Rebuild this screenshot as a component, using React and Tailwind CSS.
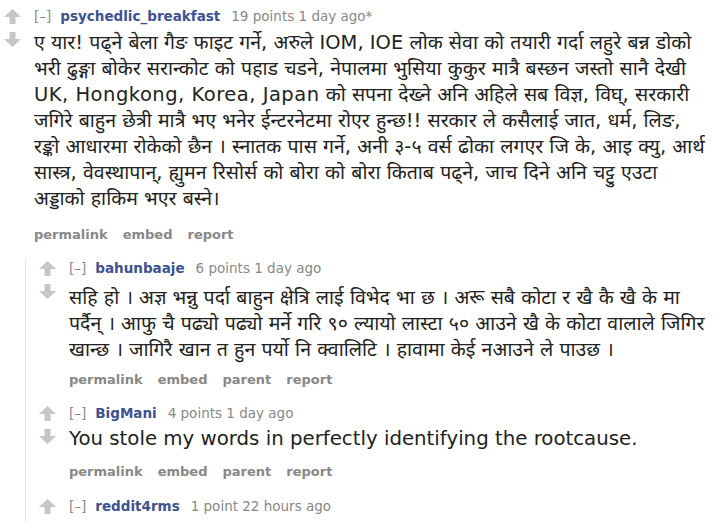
import React from "react";

const Up = () => (
  <svg width="17" height="15" viewBox="0 0 17 15" className="block">
    <polygon points="8.5,0 17,8 11.5,8 11.5,15 5.5,15 5.5,8 0,8" fill="#c6c6c6" />
  </svg>
);
const Down = () => (
  <svg width="17" height="15" viewBox="0 0 17 15" className="block">
    <polygon points="8.5,15 17,7 11.5,7 11.5,0 5.5,0 5.5,7 0,7" fill="#c6c6c6" />
  </svg>
);

function Header({ user, meta }) {
  return (
    <div className="h-[20px] flex items-center whitespace-nowrap text-[13.5px] leading-[20px]">
      <span className="text-[#888]">[–]</span>
      <span className="ml-[9px] font-bold text-[#3d5291]">{user}</span>
      <span className="ml-[11px] text-[#888]">{meta}</span>
    </div>
  );
}

function Links({ items }) {
  return (
    <div className="flex gap-[15px] text-[13px] leading-[20px] font-bold text-[#888] whitespace-nowrap">
      {items.map((t) => (
        <span key={t}>{t}</span>
      ))}
    </div>
  );
}

function Comment({ user, meta, lines, links, bodyClass, linksClass, children }) {
  return (
    <div className="flex flex-col">
      <div className="flex">
        <div className="w-[34px] pl-[4px] pt-[3px] flex flex-col gap-[8px] shrink-0">
          <Up />
          <Down />
        </div>
        <div className="flex-1 min-w-0">
          <Header user={user} meta={meta} />
          {lines && (
            <div className={bodyClass}>
              {lines.map((l, i) => (
                <div key={i} className="whitespace-nowrap">
                  {l}
                </div>
              ))}
            </div>
          )}
          {links && (
            <div className={linksClass}>
              <Links items={links} />
            </div>
          )}
        </div>
      </div>
      {children}
    </div>
  );
}

export default function App() {
  return (
    <div
      className="w-[721px] h-[522px] overflow-hidden bg-white pt-[6px] text-[#222]"
      style={{ fontFamily: '"DejaVu Sans", "Noto Sans", sans-serif' }}
    >
      <Comment
        user="psychedlic_breakfast"
        meta="19 points 1 day ago*"
        bodyClass="mt-[4px] text-[19.5px] leading-[26px] text-[#222]"
        linksClass="mt-[13px]"
        lines={[
          "ए यार! पढ्ने बेला गैङ फाइट गर्ने, अरुले IOM, IOE लोक सेवा को तयारी गर्दा लहुरे बन्न डोको",
          "भरी ढुङ्गा बोकेर सरान्कोट को पहाड चडने, नेपालमा भुसिया कुकुर मात्रै बस्छन जस्तो सानै देखी",
          <>
            <span className="tracking-[0.5px]">UK, Hongkong, Korea, Japan</span> को सपना देख्ने अनि अहिले सब विज्ञ, विघ्, सरकारी
          </>,
          "जगिरे बाहुन छेत्री मात्रै भए भनेर ईन्टरनेटमा रोएर हुन्छ!! सरकार ले कसैलाई जात, धर्म, लिङ,",
          "रङ्को आधारमा रोकेको छैन । स्नातक पास गर्ने, अनी ३-५ वर्स ढोका लगएर जि के, आइ क्यु, आर्थ",
          "सास्त्र, वेवस्थापान्, ह्युमन रिसोर्स को बोरा को बोरा किताब पढ्ने, जाच दिने अनि चट्टु एउटा",
          "अड्डाको हाकिम भएर बस्ने।",
        ]}
        links={["permalink", "embed", "report"]}
      >
        <div className="ml-[25px] mt-[13px] border-l border-[#e8e8e8] pl-[9px] flex flex-col">
          <Comment
            user="bahunbaaje"
            meta="6 points 1 day ago"
            bodyClass="mt-[7px] text-[19.5px] leading-[26px] text-[#222]"
            linksClass="mt-[7px]"
            lines={[
              "सहि हो । अज्ञ भन्नु पर्दा बाहुन क्षेत्रि लाई विभेद भा छ । अरू सबै कोटा र खै कै खै के मा",
              "पर्दैन् । आफु चै पढ्यो पढ्यो मर्ने गरि ९० ल्यायो लास्टा ५० आउने खै के कोटा वालाले जिगिर",
              "खान्छ । जागिरै खान त हुन पर्यो नि क्वालिटि । हावामा केई नआउने ले पाउछ ।",
            ]}
            links={["permalink", "embed", "parent", "report"]}
          />
          <div className="mt-[13px]">
            <Comment
              user="BigMani"
              meta="4 points 1 day ago"
              bodyClass="mt-[3px] text-[19.75px] leading-[26px] text-[#222]"
              linksClass="mt-[10px]"
              lines={["You stole my words in perfectly identifying the rootcause."]}
              links={["permalink", "embed", "parent", "report"]}
            />
          </div>
          <div className="mt-[14px]">
            <Comment user="reddit4rms" meta="1 point 22 hours ago" />
          </div>
        </div>
      </Comment>
    </div>
  );
}
